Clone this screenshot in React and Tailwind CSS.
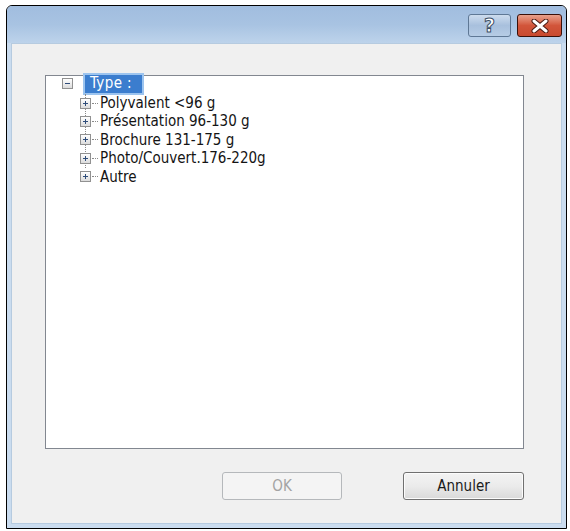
import React from 'react';

const children = [
  'Polyvalent <96 g',
  'Présentation 96-130 g',
  'Brochure 131-175 g',
  'Photo/Couvert.176-220g',
  'Autre',
];

function PlusBox() {
  return (
    <div className="w-[11px] h-[11px] shrink-0 border border-[#919191] bg-gradient-to-b from-white to-[#dcdcdc] flex items-center justify-center relative">
      <div className="absolute w-[5px] h-px bg-[#2f4d7a]" />
      <div className="absolute w-px h-[5px] bg-[#2f4d7a]" />
    </div>
  );
}

function MinusBox() {
  return (
    <div className="w-[11px] h-[11px] shrink-0 border border-[#919191] bg-gradient-to-b from-white to-[#dcdcdc] flex items-center justify-center relative">
      <div className="absolute w-[5px] h-px bg-[#2f4d7a]" />
    </div>
  );
}

function TitleButtons() {
  return (
    <div className="flex gap-[6px]">
      <div className="w-[43px] h-[23px] rounded-[3px] border border-[#5f7895] bg-gradient-to-b from-[#cddcee] via-[#a8c0dd] to-[#b6cce5] flex items-center justify-center">
        <span
          className="text-[19px] font-bold text-white leading-none"
          style={{ fontFamily: '"DejaVu Sans", sans-serif', WebkitTextStroke: '1px #3d4f66' }}
        >
          ?
        </span>
      </div>
      <div className="w-[45px] h-[23px] rounded-[3px] border border-[#3a1009] bg-gradient-to-b from-[#e8a18c] via-[#d2553a] to-[#c84a2f] flex items-center justify-center">
        <svg width="20" height="14" viewBox="0 0 20 14">
          <path d="M4 2 L16 12 M16 2 L4 12" stroke="#4a1a12" strokeWidth="5" strokeLinecap="round" />
          <path d="M4 2 L16 12 M16 2 L4 12" stroke="#ffffff" strokeWidth="3" strokeLinecap="round" />
        </svg>
      </div>
    </div>
  );
}

export default function App() {
  return (
    <div
      className="w-[570px] h-[531px] bg-white pt-[5px] pl-[6px]"
      style={{ fontFamily: '"DejaVu Sans Condensed", "DejaVu Sans", sans-serif' }}
    >
      <div className="w-[561px] h-[524px] border border-black rounded-t-[6px] bg-[#cadcef] flex flex-col overflow-hidden">
        {/* Title bar */}
        <div className="h-[37px] bg-gradient-to-b from-[#a1bddf] via-[#a8c3e2] to-[#bdd3eb] flex justify-end items-start pt-[8px] pr-[4px]">
          <TitleButtons />
        </div>

        {/* Body */}
        <div className="flex-1 mx-[4px] mb-[4px] bg-[#f0f0f0] border border-[#b6cbe0] flex flex-col pt-[31px] pl-[33px] pr-[37px]">
          {/* Tree view */}
          <div className="h-[374px] bg-white border border-[#828790]">
            <div className="pl-[16px] text-[15px] text-[#141414]">
              <div className="flex items-center h-[21px] -mt-[3px]">
                <MinusBox />
                <div className="ml-[10px] border-2 border-[#9cc4ef] bg-[#3b7dce] text-white pl-[5px] w-[61px] h-[22px] flex items-center tracking-[0.4px]">
                  Type :
                </div>
              </div>
              <div className="relative pl-[18px]">
                <div className="absolute left-[23px] top-0 h-[74px] border-l border-dotted border-[#8a8a8a]" />
                {children.map((label) => (
                  <div key={label} className="flex items-center h-[18.4px] relative">
                    <PlusBox />
                    <div className="w-[6px] border-t border-dotted border-[#8a8a8a] mx-[1px]" />
                    <span className="ml-[1px]">{label}</span>
                  </div>
                ))}
              </div>
            </div>
          </div>

          {/* Buttons */}
          <div className="flex justify-end gap-[61px] mt-[23px] text-[15px]">
            <div className="w-[120px] h-[28px] rounded-[3px] border border-[#b5b8bb] bg-[#f4f4f4] flex items-center justify-center text-[#a3a3a3]">
              OK
            </div>
            <div className="w-[121px] h-[28px] rounded-[3px] border border-[#707070] bg-gradient-to-b from-[#f3f3f3] via-[#ebebeb] to-[#d9d9d9] flex items-center justify-center text-[#1a1a1a] shadow-[inset_0_0_0_1px_#fcfcfc]">
              Annuler
            </div>
          </div>
        </div>
      </div>
    </div>
  );
}
